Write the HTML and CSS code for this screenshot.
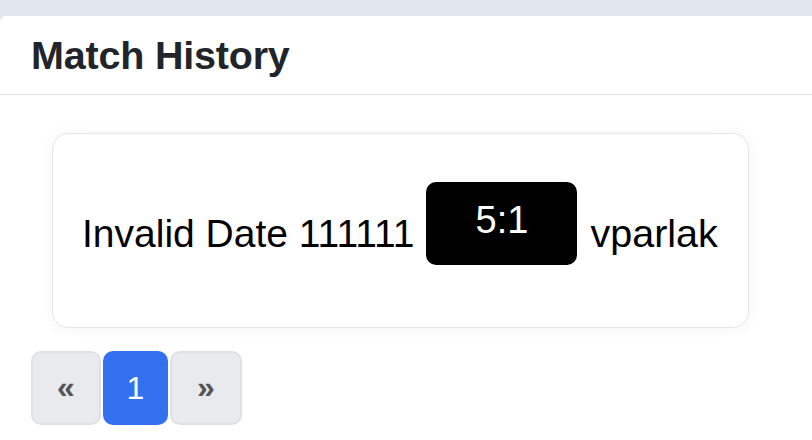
FILE: index.html
```html
<!DOCTYPE html>
<html>
<head>
<meta charset="utf-8">
<link rel="stylesheet" href="styles.css">
</head>
<body>
<div class="panel">
  <div class="panel-header"><h1 class="title">Match History</h1></div>
  <div class="panel-body">
    <div class="match-card">
      <span class="match-text">Invalid Date 111111</span>
      <span class="score">5:1</span>
      <span class="match-text player">vparlak</span>
    </div>
    <nav class="pager">
      <span class="page-btn arrow">&laquo;</span>
      <span class="page-btn active">1</span>
      <span class="page-btn arrow">&raquo;</span>
    </nav>
  </div>
</div>
</body>
</html>
```

FILE: styles.css
```css
html, body {
  margin: 0;
  padding: 0;
}
body {
  background: #e2e6ee;
  font-family: "Liberation Sans", Arial, sans-serif;
  height: 440px;
  overflow: hidden;
}
.panel {
  margin-top: 16px;
  background: #ffffff;
  border-radius: 6px 0 0 0;
  height: 424px;
}
.panel-header {
  height: 78px;
  border-bottom: 1px solid #dee2e6;
  display: flex;
  align-items: center;
  padding-left: 31px;
}
.title {
  margin: 0;
  font-size: 39.5px;
  font-weight: 700;
  color: #212529;
  letter-spacing: -0.2px;
}
.panel-body {
  padding: 38px 0 0 0;
}
.match-card {
  margin-left: 52px;
  width: 666px;
  height: 193px;
  box-sizing: content-box;
  border: 1px solid #e6e6ea;
  border-radius: 16px;
  box-shadow: 0 0 14px rgba(0, 0, 0, 0.05);
  display: flex;
  align-items: flex-start;
  gap: 12px;
  padding-left: 29px;
  color: #000;
}
.match-text {
  font-size: 39px;
  line-height: 1;
  margin-top: 80px;
}
.player {
  margin-left: 1px;
  font-size: 39.5px;
}
.score {
  margin-top: 48px;
  width: 151px;
  height: 83px;
  background: #000;
  color: #fff;
  border-radius: 10px;
  font-size: 38px;
  display: flex;
  align-items: center;
  justify-content: center;
  padding-bottom: 6px;
  box-sizing: border-box;
}
.pager {
  display: flex;
  gap: 2px;
  margin: 23px 0 0 31px;
}
.page-btn {
  height: 74px;
  width: 70px;
  box-sizing: border-box;
  display: flex;
  align-items: center;
  justify-content: center;
  background: #e9eaee;
  border: 2px solid #dfe1e5;
  border-radius: 10px;
  color: #555;
  font-size: 32px;
}
.page-btn.arrow {
  font-weight: 700;
  padding-bottom: 2px;
}
.page-btn.active {
  width: 65px;
  background: #3370f0;
  border-color: #3370f0;
  color: #fff;
  font-size: 32px;
}
.page-btn:last-child {
  width: 72px;
}
```
